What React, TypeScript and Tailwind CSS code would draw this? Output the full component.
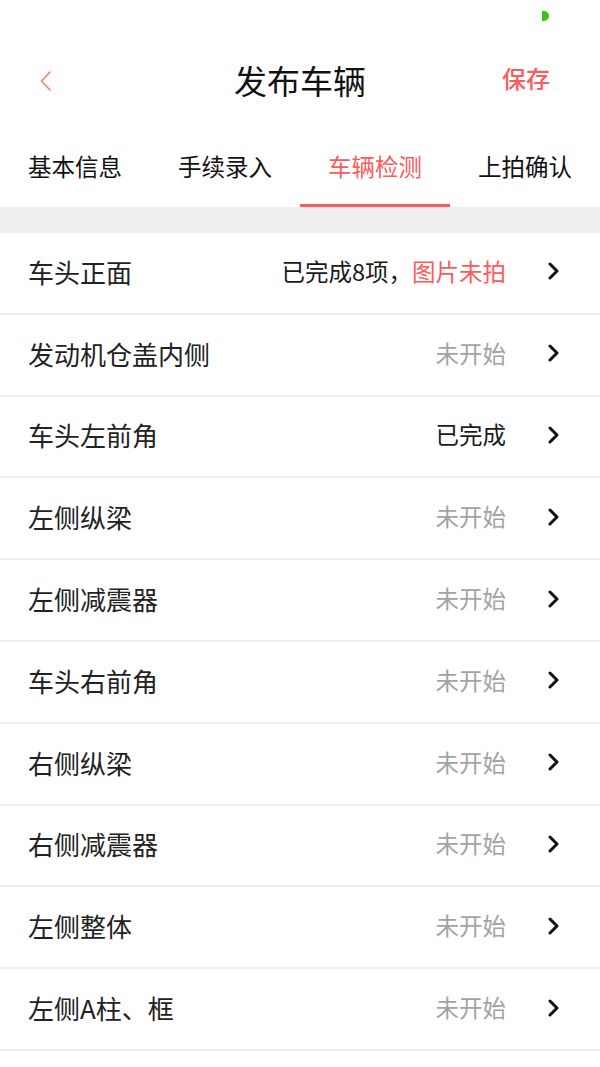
const tabs = ["基本信息", "手续录入", "车辆检测", "上拍确认"];

type Item = { label: string; status: "done" | "todo" | "partial" };

const items: Item[] = [
  { label: "车头正面", status: "partial" },
  { label: "发动机仓盖内侧", status: "todo" },
  { label: "车头左前角", status: "done" },
  { label: "左侧纵梁", status: "todo" },
  { label: "左侧减震器", status: "todo" },
  { label: "车头右前角", status: "todo" },
  { label: "右侧纵梁", status: "todo" },
  { label: "右侧减震器", status: "todo" },
  { label: "左侧整体", status: "todo" },
  { label: "左侧A柱、框", status: "todo" },
];

function Arrow() {
  return (
    <svg width="12" height="18" viewBox="0 0 12 18" aria-hidden="true">
      <path
        d="M3 2 L10 9 L3 16"
        fill="none"
        stroke="#111"
        strokeWidth="3"
        strokeLinecap="round"
        strokeLinejoin="round"
      />
    </svg>
  );
}

function BackIcon() {
  return (
    <svg width="14" height="22" viewBox="0 0 14 22" aria-hidden="true">
      <path
        d="M11 2 L2.5 11 L11 20"
        fill="none"
        stroke="#ff7b66"
        strokeWidth="1.6"
        strokeLinecap="round"
        strokeLinejoin="round"
      />
    </svg>
  );
}

function Status({ status }: { status: Item["status"] }) {
  if (status === "partial") {
    return (
      <span className="text-[23.5px] text-[#1a1a1a]">
        已完成8项，<span className="text-[#fa5c5c]">图片未拍</span>
      </span>
    );
  }
  if (status === "done") {
    return <span className="text-[23.5px] text-[#1a1a1a]">已完成</span>;
  }
  return <span className="text-[23.5px] text-[#a3a3a3]">未开始</span>;
}

export default function App() {
  return (
    <div
      className="min-h-[1067px] w-[600px] bg-white"
      style={{ fontFamily: '"Noto Sans CJK SC", "Noto Sans", sans-serif' }}
    >
      {/* status bar */}
      <div className="flex h-[40px] justify-end pt-[11px] pr-[51px]">
        <span className="h-[10px] w-[7px] rounded-r-full bg-[#4cbf0c]" />
      </div>

      {/* header */}
      <div className="grid h-[80px] grid-cols-[120px_1fr_120px] items-center">
        <div className="flex pl-[39px] pt-[2px]">
          <BackIcon />
        </div>
        <h1 className="text-center text-[33px] leading-none text-[#111]">发布车辆</h1>
        <div className="pr-[50px] pb-[4px] text-right text-[24px] font-medium leading-none text-[#fa5c5c]">
          保存
        </div>
      </div>

      {/* tabs */}
      <div className="grid h-[87px] grid-cols-4">
        {tabs.map((tab, i) => (
          <div key={tab} className="flex flex-col">
            <div
              className={`flex flex-1 items-center justify-center pt-[10px] text-[23.5px] ${
                i === 2 ? "text-[#fa5c5c]" : "text-[#111]"
              }`}
            >
              {tab}
            </div>
            <div className={`h-[3px] ${i === 2 ? "bg-[#fa5c5c]" : "bg-transparent"}`} />
          </div>
        ))}
      </div>

      <div className="h-[26px] bg-[#eeeeee]" />

      {/* list */}
      <ul>
        {items.map((item) => (
          <li
            key={item.label}
            className="flex h-[81.8px] items-center border-b-2 border-[#eeeeee] pb-[3px] pl-[28px] pr-[41px]"
          >
            <span className="flex-1 text-[26px] text-[#222]">{item.label}</span>
            <Status status={item.status} />
            <span className="ml-[41px] flex">
              <Arrow />
            </span>
          </li>
        ))}
      </ul>
    </div>
  );
}
